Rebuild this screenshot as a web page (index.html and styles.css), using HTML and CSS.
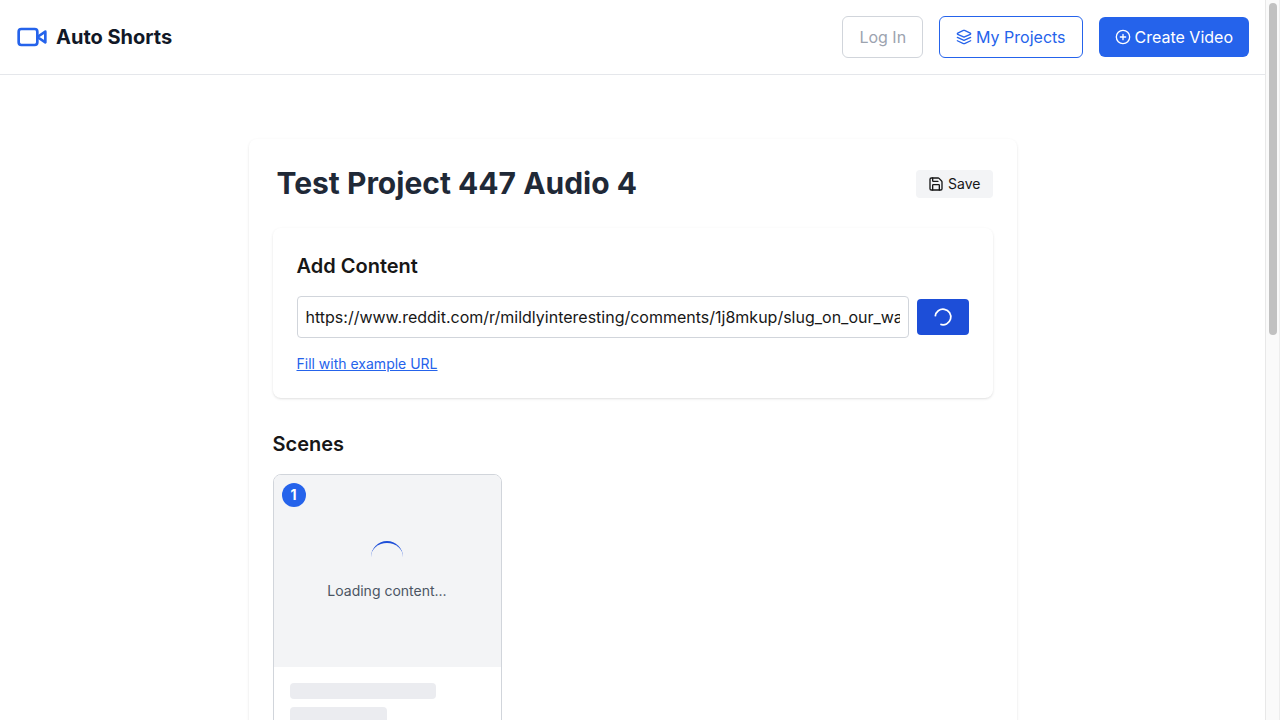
FILE: index.html
```html
<!DOCTYPE html>
<html lang="en">
<head>
<meta charset="utf-8">
<title>Auto Shorts</title>
<link rel="stylesheet" href="styles.css">
</head>
<body>
<div class="viewport">
  <div class="page">
    <header class="topbar">
      <a class="brand">
        <svg class="brand-icon" viewBox="0 0 24 24"><path d="m22 8-6 4 6 4V8Z"/><rect x="2" y="6" width="14" height="12" rx="2"/></svg>
        <span>Auto Shorts</span>
      </a>
      <nav class="actions">
        <button class="btn btn-muted">Log In</button>
        <button class="btn btn-outline">
          <svg class="icon" viewBox="0 0 24 24"><path d="M12.83 2.18a2 2 0 0 0-1.66 0L2.6 6.08a1 1 0 0 0 0 1.83l8.58 3.91a2 2 0 0 0 1.66 0l8.58-3.9a1 1 0 0 0 0-1.83Z"/><path d="m22 17.65-9.17 4.16a2 2 0 0 1-1.66 0L2 17.65"/><path d="m22 12.65-9.17 4.16a2 2 0 0 1-1.66 0L2 12.65"/></svg>
          <span>My Projects</span>
        </button>
        <button class="btn btn-primary">
          <svg class="icon" viewBox="0 0 24 24"><circle cx="12" cy="12" r="10"/><path d="M8 12h8M12 8v8"/></svg>
          <span>Create Video</span>
        </button>
      </nav>
    </header>
    <main class="project">
      <div class="project-head">
        <h1 class="project-title">Test Project 447 Audio 4</h1>
        <button class="save">
          <svg class="icon" viewBox="0 0 24 24"><path d="M15.2 3a2 2 0 0 1 1.4.6l3.8 3.8a2 2 0 0 1 .6 1.4V19a2 2 0 0 1-2 2H5a2 2 0 0 1-2-2V5a2 2 0 0 1 2-2z"/><path d="M17 21v-7a1 1 0 0 0-1-1H8a1 1 0 0 0-1 1v7"/><path d="M7 3v4a1 1 0 0 0 1 1h7"/></svg>
          <span>Save</span>
        </button>
      </div>
      <section class="content-card">
        <h2 class="heading">Add Content</h2>
        <div class="url-row">
          <input class="url-input" type="text" value="https://www.reddit.com/r/mildlyinteresting/comments/1j8mkup/slug_on_our_wall/">
          <button class="submit" aria-label="Loading">
            <svg class="submit-spinner" viewBox="0 0 20 20"><path d="M2.25 9.3A7.8 7.8 0 1 1 7.3 17.3"/></svg>
          </button>
        </div>
        <a class="example">Fill with example URL</a>
      </section>
      <h2 class="heading scenes-heading">Scenes</h2>
      <div class="scenes">
        <article class="scene">
          <div class="scene-preview">
            <span class="scene-number">1</span>
            <div class="spinner"></div>
            <p class="loading">Loading content...</p>
          </div>
          <div class="scene-body">
            <div class="skeleton skeleton-long"></div>
            <div class="skeleton skeleton-short"></div>
          </div>
        </article>
      </div>
    </main>
  </div>
  <div class="scroll-track"><div class="scroll-thumb"></div></div>
</div>
</body>
</html>
```
FILE: styles.css
```css
* { box-sizing: border-box; }
body, h1, h2, p { margin: 0; }
body { font-family: Inter, "Liberation Sans", sans-serif; font-size: 16px; line-height: 24px; color: #171717; background: #fff; overflow: hidden; }
button, input { font: inherit; color: inherit; }
button { border: 0; display: flex; align-items: center; justify-content: center; }
svg { fill: none; stroke: currentColor; stroke-width: 2; stroke-linecap: round; stroke-linejoin: round; flex: none; }

.viewport { display: flex; height: 720px; overflow: hidden; }
.page { flex: 1; min-width: 0; }
.topbar { display: flex; align-items: center; justify-content: space-between; height: 75px; padding: 0 16px; border-bottom: 1px solid #e5e7eb; }
.brand { display: flex; align-items: center; gap: 8px; font-size: 20px; line-height: 28px; font-weight: 700; color: #111827; }
.brand-icon { width: 32px; height: 32px; color: #2563eb; }
.actions { display: flex; align-items: center; gap: 16px; }
.btn { gap: 4px; padding: 8px 16px; border-radius: 6px; }
.btn-muted { background: #fff; border: 1px solid #d1d5db; color: #9ca3af; }
.btn-outline { background: #fff; border: 1px solid #2563eb; color: #2563eb; }
.btn-primary { background: #2563eb; color: #fff; }
.icon { width: 16px; height: 16px; }

.project { width: 768px; height: 900px; margin: 64px auto 0; padding: 24px; border-radius: 8px; box-shadow: 0 1px 3px rgba(0, 0, 0, .1), 0 1px 2px -1px rgba(0, 0, 0, .1); }
.project-head { display: flex; align-items: center; justify-content: space-between; height: 41px; margin-bottom: 24px; }
.project-title { padding: 0 0 2px 4px; font-size: 30px; line-height: 36px; font-weight: 700; color: #1f2937; }
.save { gap: 4px; height: 28px; padding: 4px 12px; border-radius: 4px; background: #f3f4f6; font-size: 14px; line-height: 20px; }

.content-card { height: 170px; padding: 24px; border-radius: 8px; box-shadow: 0 1px 3px rgba(0, 0, 0, .1), 0 1px 2px -1px rgba(0, 0, 0, .1); }
.heading { font-size: 20px; line-height: 28px; font-weight: 600; }
.url-row { display: flex; align-items: center; gap: 8px; margin: 16px 0; }
.url-input { flex: 1; min-width: 0; height: 42px; padding: 8px; border: 1px solid #d1d5db; border-radius: 4px; background: #fff; outline: 0; }
.submit { width: 52px; height: 36px; padding: 0; border-radius: 4px; background: #1d4ed8; color: #fff; }
.submit-spinner { width: 20px; height: 20px; stroke-width: 1.7; stroke-linecap: butt; }
.example { display: block; font-size: 14px; line-height: 20px; color: #2563eb; text-decoration: underline; }

.scenes-heading { margin: 32px 0 16px; }
.scenes { display: grid; grid-template-columns: repeat(3, 229px); gap: 16px; }
.scene { height: 340px; border: 1px solid #d1d5db; border-radius: 8px; overflow: hidden; }
.scene-preview { position: relative; display: flex; flex-direction: column; align-items: center; justify-content: center; gap: 8px; height: 192px; background: #f3f4f6; }
.scene-number { position: absolute; top: 8px; left: 8px; width: 24px; height: 24px; border-radius: 50%; background: #2563eb; color: #fff; font-size: 14px; font-weight: 700; text-align: center; }
.spinner { width: 32px; height: 32px; border: 2px solid transparent; border-width: 2px 0 0; border-top-color: #1d4ed8; border-radius: 50%; }
.loading { font-size: 14px; line-height: 20px; color: #4b5563; }
.scene-body { display: flex; flex-direction: column; gap: 8px; padding: 16px; }
.skeleton { height: 16px; border-radius: 4px; background: #ebecf0; }
.skeleton-long { width: 75%; }
.skeleton-short { width: 50%; }

.scroll-track { width: 15px; padding: 3px 2px 0 3px; border-left: 1px solid #e8e8e8; border-right: 1px solid #ededed; background: #fafafa; }
.scroll-thumb { width: 8px; height: 332px; border-radius: 4px; background: #c1c1c1; }
```
